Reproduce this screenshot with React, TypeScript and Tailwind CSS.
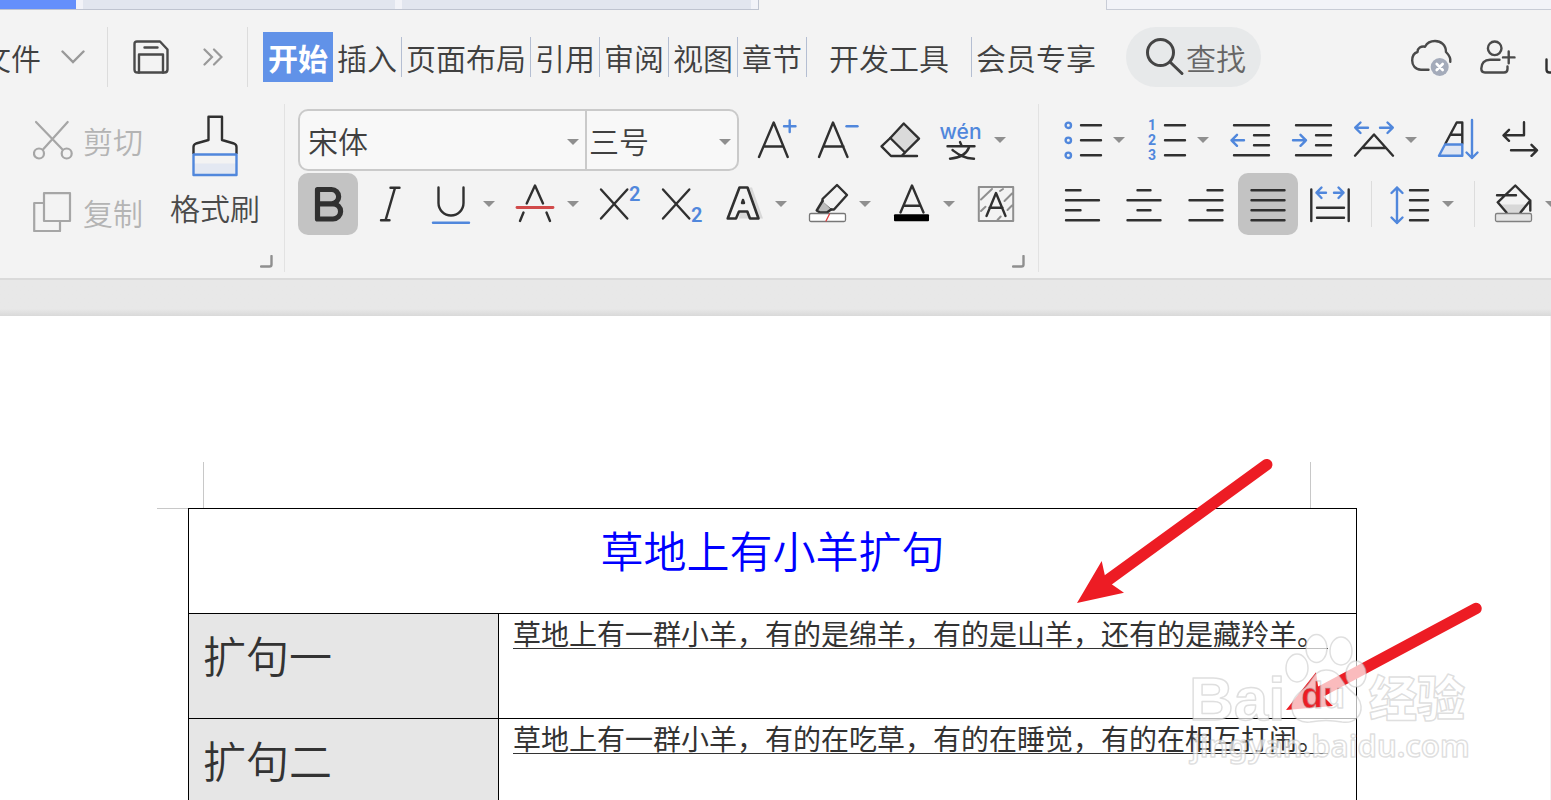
import React from "react";

const ink = "#303030";
const blue = "#5087dc";
const gray = "#8f8f8f";

const menuTabs = ["插入", "页面布局", "引用", "审阅", "视图", "章节"];

const rows = [
  {
    label: "扩句一",
    text: "草地上有一群小羊，有的是绵羊，有的是山羊，还有的是藏羚羊。",
  },
  {
    label: "扩句二",
    text: "草地上有一群小羊，有的在吃草，有的在睡觉，有的在相互打闹。",
  },
];

function Caret() {
  return (
    <svg width="12" height="6" viewBox="0 0 12 6" className="block">
      <path d="M0 0H12L6 6Z" fill={gray} />
    </svg>
  );
}

function Tool({ label, children, active, drop }: any) {
  return (
    <div className="flex items-center shrink-0">
      <button
        aria-label={label}
        className={`flex items-center justify-center mx-px w-[60px] h-[62px] rounded-[10px] ${
          active ? "bg-[#c3c3c3]" : ""
        }`}
      >
        <svg
          width="40"
          height="40"
          viewBox="0 0 40 40"
          fill="none"
          stroke={ink}
          strokeWidth="2.4"
          strokeLinecap="round"
          strokeLinejoin="round"
          className="overflow-visible"
        >
          {children}
        </svg>
      </button>
      {drop && (
        <button aria-label={`${label}选项`} className="w-[22px] h-[62px]">
          <Caret />
        </button>
      )}
    </div>
  );
}

function Corner() {
  return (
    <svg width="13" height="13" viewBox="0 0 13 13" fill="none">
      <path d="M1 11.5H9.5Q11.5 11.5 11.5 9.5V1" stroke={gray} strokeWidth="2.4" strokeLinecap="round" />
    </svg>
  );
}

function Divider() {
  return <div className="w-px h-[60px] bg-[#dcdcdc] shrink-0"></div>;
}

function TabStrip() {
  return (
    <div className="flex h-[10px] bg-[#f2f3f8] shrink-0">
      <div className="w-[759px] flex gap-[7px] border-b border-r border-[#bfc4d0]">
        <div className="w-[76px] bg-[#648ffb]"></div>
        <div className="w-[312px] bg-[#e2e6ef]"></div>
        <div className="w-[349px] bg-[#e2e6ef]"></div>
      </div>
      <div className="w-[347px] bg-[#f3f3f3]"></div>
      <div className="flex-1 border-b border-l border-[#c8ccd6]"></div>
    </div>
  );
}

function MenuBar() {
  return (
    <nav className="flex items-center h-[94px] shrink-0 text-[30px] leading-[38px] text-[#404040] whitespace-nowrap">
      <button className="-ml-[19px] mr-[22px] flex items-center gap-5">
        文件
        <svg width="24" height="14" viewBox="0 0 24 14" fill="none">
          <path d="M1.5 1.5L12 12L22.5 1.5" stroke="#999" strokeWidth="2.4" strokeLinecap="round" />
        </svg>
      </button>
      <Divider />
      <button aria-label="保存" className="ml-[25px]">
        <svg width="36" height="34" viewBox="0 0 36 34" fill="none" stroke="#4a4a4a" strokeWidth="2.4" strokeLinejoin="round" strokeLinecap="round">
          <path d="M4 1.5H27L34.5 9.5V29.5Q34.5 32.5 31.5 32.5H4.5Q1.5 32.5 1.5 29.5V4Q1.5 1.5 4 1.5Z" />
          <path d="M11.500 7.500H24.500M6 32.500V14.500H30V32.500" />
        </svg>
      </button>
      <button aria-label="更多" className="ml-[34px] mr-6">
        <svg width="20" height="18" viewBox="0 0 20 18" fill="none" stroke="#999" strokeWidth="2.2" strokeLinecap="round">
          <path d="M1.500 1.500L9 9L1.500 16.500M11 1.500L18.500 9L11 16.500" />
        </svg>
      </button>
      <Divider />
      <button className="ml-[15px] w-[70px] h-[50px] bg-[#6192e8] text-white font-bold">
        开始
      </button>
      {menuTabs.map((name) => (
        <button key={name} className="h-10 px-1 border-r border-[#b4bed2]">
          {name}
        </button>
      ))}
      <button className="h-10 px-[22px] border-r border-[#b4bed2]">开发工具</button>
      <button className="px-1">会员专享</button>
      <label className="ml-[26px] flex items-center w-[135px] h-[60px] pl-5 rounded-full bg-[#e7e9ea]">
        <svg width="40" height="38" viewBox="0 0 40 38" fill="none" stroke="#454545" strokeWidth="3" strokeLinecap="round" className="shrink-0">
          <circle cx="14.500" cy="14.500" r="13" />
          <path d="M24 24L36 35.500" />
        </svg>
        <input
          type="text"
          aria-label="查找"
          placeholder="查找"
          className="w-[66px] bg-transparent outline-none placeholder:text-[#666]"
        />
      </label>
      <div className="ml-auto -mr-6 flex items-center gap-[29px]">
        <button aria-label="云同步">
          <svg width="40" height="36" viewBox="0 0 40 36" fill="none" stroke="#4a4a4a" strokeWidth="2.4" strokeLinecap="round" strokeLinejoin="round" className="overflow-visible">
            <path d="M17.500 30.700H10C4 30.700 1.200 26 1.200 21.500C1.200 17 3 14 6.500 13C6.500 9 10 7 14 7.700C16 4 20 2 24 2C30 2 35 6 35 13C38 16 40 19 39.300 22.700" />
            <circle cx="28.700" cy="28" r="9" fill="#a4abba" stroke="none" />
            <path d="M25.700 25L31.700 31M31.700 25L25.700 31" stroke="#fff" strokeWidth="2.600" />
          </svg>
        </button>
        <button aria-label="邀请">
          <svg width="36" height="34" viewBox="0 0 36 34" fill="none" stroke="#4a4a4a" strokeWidth="2.4" strokeLinecap="round" strokeLinejoin="round">
            <circle cx="14.700" cy="8.300" r="6.800" />
            <path d="M19.500 19.700H10C4.500 19.700 1.300 23 1.300 28.500Q1.300 32.500 5 32.500H24Q27.500 32.500 27.500 29V26.500M28.700 11.500V23.300M23 17.400H34.500" />
          </svg>
        </button>
        <button aria-label="分享">
          <svg width="30" height="34" viewBox="0 0 30 34" fill="none" stroke="#303030" strokeWidth="2.4" strokeLinecap="round">
            <path d="M1.500 19.500V29.500Q1.500 32.500 4.500 32.500H26M10 12L16 3L22 12" />
          </svg>
        </button>
      </div>
    </nav>
  );
}

function Clipboard() {
  return (
    <section className="flex w-[285px] shrink-0 border-r border-[#e2e2e2] text-[30px] leading-[38px] whitespace-nowrap">
      <div className="flex flex-col gap-[10px] pt-[5px] pl-[33px] shrink-0">
        <button className="flex items-center gap-[10px] h-[62px] text-[#b4b4b4]">
          <svg width="40" height="40" viewBox="0 0 40 40" fill="none" stroke="#a6a6a6" strokeWidth="2.2" strokeLinecap="round">
            <circle cx="6" cy="33.500" r="5" />
            <circle cx="33.700" cy="33.500" r="5" />
            <path d="M3 2L29.500 29.500M34.700 2L10 29.500" />
          </svg>
          剪切
        </button>
        <button className="flex items-center gap-[10px] h-[62px] text-[#b4b4b4]">
          <svg width="40" height="40" viewBox="0 0 40 40" fill="none" stroke="#a6a6a6" strokeWidth="2.2" strokeLinejoin="round">
            <path d="M11 1.200H37V29H11ZM11 11H1.200V39H27V29" />
          </svg>
          复制
        </button>
      </div>
      <button className="ml-[27px] shrink-0 flex flex-col items-center self-start pt-[11px] gap-[11px] text-[#4a4a4a]">
        <svg width="46" height="62" viewBox="0 0 46 62" fill="none" strokeWidth="2.400" strokeLinejoin="round">
          <path d="M1.500 39V32Q1.500 29.500 4 28.500L16.500 25V1.800H30V25L42 28.500Q44.500 29.500 44.500 32V39" stroke={ink} />
          <path d="M2 48.500H44V60H2Z" fill="#e3e8f2" />
          <path d="M1.500 39.500H44.500V60H1.500Z" stroke={blue} />
        </svg>
        格式刷
      </button>
      <button aria-label="剪贴板设置" className="ml-auto self-end mr-[13px] pb-1">
        <Corner />
      </button>
    </section>
  );
}

function FontGroup() {
  return (
    <section className="w-[754px] shrink-0 border-r border-[#e2e2e2] pt-[5px] pl-3 flex flex-col gap-[2px]">
      <div className="flex h-[62px]">
        <div className="flex w-[441px] ml-px mr-[7px] border-2 border-[#cacaca] rounded-[10px] bg-[#f8f8f8] text-[30px] text-[#404040] overflow-hidden">
          <div className="relative w-[287px] border-r-2 border-[#cacaca]">
            <select aria-label="字体" className="appearance-none w-full h-full pl-2 bg-transparent">
              <option>宋体</option>
            </select>
            <span className="absolute right-[6px] top-[28px] pointer-events-none">
              <Caret />
            </span>
          </div>
          <div className="relative flex-1">
            <select aria-label="字号" className="appearance-none w-full h-full pl-[2px] bg-transparent">
              <option>三号</option>
            </select>
            <span className="absolute right-[6px] top-[28px] pointer-events-none">
              <Caret />
            </span>
          </div>
        </div>
        <Tool label="增大字号">
          <path d="M2 37L16.700 2.500L30.700 37M6.500 26.500H26.500" />
          <path d="M32.700 .5V12M27 6.300H38.500" stroke={blue} />
        </Tool>
        <Tool label="减小字号">
          <path d="M0 37L14 2.500L28.500 37M4.500 26.500H24.500" />
          <path d="M27.500 6.300H38.500" stroke={blue} />
        </Tool>
        <Tool label="清除格式">
          <path d="M22.700 3.500L38 18.700L24 32.500L9.300 18Z" fill="#dadada" />
          <path d="M9.300 18L.5 26.300L10 36H36M24 32.500L20.500 36" />
        </Tool>
        <Tool label="拼音指南" drop>
          <text x="17.500" y="19" textAnchor="middle" fontSize="21" fontFamily="Inter, sans-serif" fontWeight="500" fill={blue} stroke="none">
            wén
          </text>
          <path d="M17 22L18.500 25.500M4.500 26.300H31.500M26 27.500C23 35 16 38 7 38.700M9.500 30C15 34 20 38.500 31 38.700" />
        </Tool>
      </div>
      <div className="flex h-[62px]">
        <Tool label="加粗" active>
          <path d="M9.500 5.500H23.500A7 7 0 0 1 23.500 19.800H9.500M9.500 5.500V35H25A7.600 7.600 0 0 0 25 19.800" strokeWidth="5.200" />
        </Tool>
        <Tool label="倾斜">
          <path d="M20.500 3.800H29.500M25 3.800L15.500 36.300M11 36.300H19.500" />
        </Tool>
        <Tool label="下划线" drop>
          <path d="M6.500 3.500V19A12.500 12.500 0 0 0 31.500 19V3.500" />
          <path d="M1 38.700H37" stroke={blue} />
        </Tool>
        <Tool label="删除线" drop>
          <path d="M10.700 19.500L19 1.500L27 19.500M7.500 28.500L4 37M30.500 28.500L34 37" />
          <path d="M1 23.500H37" stroke="#d14a4a" strokeWidth="2.800" />
        </Tool>
        <Tool label="上标">
          <path d="M1 5.500L27.300 34.500M27.300 5.500L1 34.500" />
          <text x="29" y="17" fontSize="20" fontFamily="Roboto, sans-serif" fontWeight="600" fill={blue} stroke="none">
            2
          </text>
        </Tool>
        <Tool label="下标">
          <path d="M1 5.500L27.300 34.500M27.300 5.500L1 34.500" />
          <text x="29" y="37.500" fontSize="20" fontFamily="Roboto, sans-serif" fontWeight="600" fill={blue} stroke="none">
            2
          </text>
        </Tool>
        <Tool label="文字效果" drop>
          <path d="M20 3.500H28L39 34.500H15Z" fill="#d8d8d8" stroke="none" />
          <path d="M3.700 34.500L15.500 3.500H23.500L34.500 34.500H26L23.300 27.500H15L12 34.500Z" fill="#f3f3f3" strokeWidth="2.600" />
          <path d="M19 16L18 19H20Z" />
        </Tool>
        <Tool label="突出显示" drop>
          <path d="M29 1L39 11L26 25.500H22L14.500 19V15Z" />
          <path d="M14.500 17L8.700 26.500L12 28.500H19L23 25.500" fill="#bdbdbd" />
          <rect x="1.500" y="29.500" width="36" height="8" rx="1.500" fill="#fff" stroke="#777" strokeWidth="1.300" />
          <path d="M18 37L21.500 30" stroke="#e04040" strokeWidth="1.300" />
        </Tool>
        <Tool label="字体颜色" drop>
          <path d="M8.500 28.500L20 1.500L31.500 28.500M11.500 21.700H28.500" />
          <rect x="2" y="30.200" width="35" height="7" rx="1" fill="#000" stroke="none" />
        </Tool>
        <Tool label="字符底纹">
          <path d="M2.800 3H37.200V37H2.800ZM5 15.500L16 5M5 27L9.500 22.700M24 7L27 5M28.500 17L36 9.500M31.500 26L36 21.500M21.500 36L24.700 32.500" stroke={gray} strokeWidth="2" />
          <path d="M10.500 32L20 9L29.500 32M13.500 23.700H26.500" />
        </Tool>
      </div>
      <button aria-label="字体设置" className="mt-auto ml-auto mr-[13px] pb-1">
        <Corner />
      </button>
    </section>
  );
}

function Paragraph() {
  return (
    <section className="shrink-0 pt-[5px] pl-3 flex flex-col gap-[2px]">
      <div className="flex h-[62px]">
        <Tool label="项目符号" drop>
          <path d="M19 5.300H39M19 20.300H39M19 35.300H39" />
          <g stroke={blue}>
            <circle cx="6.300" cy="5.300" r="2.700" />
            <circle cx="6.300" cy="20.300" r="2.700" />
            <circle cx="6.300" cy="35.300" r="2.700" />
          </g>
        </Tool>
        <Tool label="编号" drop>
          <path d="M19 5.300H39M19 20.300H39M19 35.300H39" />
          <g fontSize="14" fontFamily="Roboto, sans-serif" fontWeight="700" fill={blue} stroke="none">
            <text x="2" y="10">1</text>
            <text x="2" y="25">2</text>
            <text x="2" y="40">3</text>
          </g>
        </Tool>
        <Tool label="减少缩进">
          <path d="M4 5.300H39M24 15.300H39M24 25.300H39M4 35.300H39" />
          <path d="M14 20.300H1.500M7 14.800L1.500 20.300L7 25.800" stroke={blue} />
        </Tool>
        <Tool label="增加缩进">
          <path d="M4 5.300H39M24 15.300H39M24 25.300H39M4 35.300H39" />
          <path d="M1 20.300H14M8.500 14.800L14 20.300L8.500 25.800" stroke={blue} />
        </Tool>
        <Tool label="中文版式" drop>
          <path d="M1 35.700L20 14.500L39 35.700M9 28H31" />
          <path d="M14 7.700H1.500M6.500 2.500L1.200 7.700L6.500 13M26 7.700H38.500M33.500 2.500L38.800 7.700L33.500 13" stroke={blue} />
        </Tool>
        <Tool label="排序">
          <path d="M7.500 23.500L18.700 2.500H24.300V23.500M12.500 14.700H24" />
          <path d="M7 24.500H24.300V35.700H1Z" fill="#dfe6f3" stroke={blue} />
          <path d="M34 0V38M28.500 32.500L34 38L39.500 32.500" stroke={blue} />
        </Tool>
        <Tool label="显示编辑标记">
          <path d="M24 2.300V15.300H4M9 9.800L3.500 15.300L9 20.800M11 30.300H37M31.500 24.800L37 30.300L31.500 35.800" />
        </Tool>
      </div>
      <div className="flex items-center h-[62px]">
        <Tool label="左对齐">
          <path d="M4 6.300H18.500M4 16.300H37M4 26.300H18.500M4 36.300H37" />
        </Tool>
        <Tool label="居中">
          <path d="M13.500 6.300H26.500M3.500 16.300H36.500M13.500 26.300H26.500M3.500 36.300H36.500" />
        </Tool>
        <Tool label="右对齐">
          <path d="M21.500 6.300H36.500M3.500 16.300H36.500M21.500 26.300H36.500M3.500 36.300H36.500" />
        </Tool>
        <Tool label="两端对齐" active>
          <path d="M3.500 6.300H36.500M3.500 16.300H36.500M3.500 26.300H36.500M3.500 36.300H36.500" />
        </Tool>
        <Tool label="分散对齐">
          <path d="M1.300 5.500V37M38.700 5.500V37M7 23.700H34M7 33.700H34" />
          <path d="M16 8.700H6.500M11.500 3.500L6.500 8.700L11.500 14M24 8.700H33.500M28.500 3.500L33.500 8.700L28.500 14" stroke={blue} />
        </Tool>
        <div className="ml-[10px] mr-2 w-px h-[46px] bg-[#dcdcdc]"></div>
        <Tool label="行距" drop>
          <path d="M19 6.300H37M19 16.300H37M19 26.300H37M19 36.300H37" />
          <path d="M6 3.500V39M.5 9L6 3.500L11.500 9M.5 33.500L6 39L11.500 33.500" stroke={blue} />
        </Tool>
        <div className="ml-[10px] mr-2 w-px h-[46px] bg-[#dcdcdc]"></div>
        <Tool label="底纹颜色" drop>
          <path d="M6.500 20.500H32L25 29H13Z" fill="#d8d8d8" stroke="none" />
          <path d="M12.500 28.500L3.700 18.300L21.300 1.500L36.300 16.500L26.500 28.500M3 11.300H22M36.300 16.500V26.500" />
          <rect x="1.500" y="29.500" width="36" height="8" rx="1.500" fill="#e4e4e4" stroke="#808080" strokeWidth="1.300" />
        </Tool>
      </div>
    </section>
  );
}

function Arrows() {
  return (
    <svg width="403" height="246" viewBox="1077 459 403 246" fill="#ed1c24" className="absolute left-[1077px] top-[143px] overflow-visible pointer-events-none">
      <path d="M1266.700 464.700L1106 581.500" stroke="#ed1c24" strokeWidth="11.500" strokeLinecap="round" />
      <path d="M1077 603L1101.700 561L1105 576L1112 584.500L1124 592.700Z" />
      <path d="M1476 608.500L1320 692" stroke="#ed1c24" strokeWidth="11.500" strokeLinecap="round" />
      <path d="M1286 710L1316 672.300L1318 686L1324 697L1333 706Z" />
    </svg>
  );
}

function Watermark() {
  return (
    <svg
      width="285"
      height="140"
      viewBox="1187 630 285 140"
      fill="#fff"
      fillOpacity="0.7"
      stroke="#b8b8b8"
      strokeOpacity="0.45"
      strokeWidth="1.500"
      strokeLinejoin="round"
      className="absolute left-[1187px] top-[314px] overflow-visible pointer-events-none"
    >
      <mask id="pad" maskUnits="userSpaceOnUse" x="1280" y="660" width="90" height="70">
        <rect x="1280" y="660" width="90" height="70" fill="#fff" fillOpacity="1" stroke="none" />
        <text x="1301" y="708" fontSize="36" fontWeight="700" fontFamily="Liberation Sans, sans-serif" fill="#000" fillOpacity="1" stroke="none">
          du
        </text>
      </mask>
      <ellipse cx="1297" cy="668" rx="11" ry="14" />
      <ellipse cx="1316.500" cy="648.500" rx="10.500" ry="14" />
      <ellipse cx="1341" cy="651" rx="11" ry="14" />
      <ellipse cx="1356" cy="674" rx="10" ry="13" />
      <path
        mask="url(#pad)"
        d="M1326 670C1314 670 1313 681 1305 688C1297 694 1291 700 1292 709C1293 719 1301 723 1310 722C1320 720 1332 720 1342 722C1354 724 1362 716 1361 706C1360 696 1352 693 1346 686C1340 678 1338 670 1326 670Z"
      />
      <text x="1301" y="708" fontSize="36" fontWeight="700" fontFamily="Liberation Sans, sans-serif" fill="none">
        du
      </text>
      <text x="1189" y="720" fontSize="62" fontWeight="700" fontFamily="Liberation Sans, sans-serif">
        Bai
      </text>
      <text x="1369" y="716" fontSize="48" fontWeight="900" fontFamily="Noto Sans CJK SC, sans-serif">
        经验
      </text>
      <text x="1191" y="757" fontSize="31" fontWeight="600" fontFamily="Noto Sans, sans-serif">
        jingyan.baidu.com
      </text>
    </svg>
  );
}

function Document() {
  return (
    <main className="relative flex-1 mr-px bg-white pt-[146px] pl-[157px] pr-[193px]">
      <div className="ml-[46px] mr-[46px] h-[46px] border-x border-[#c8c8c8]"></div>
      <div className="flex">
        <div className="w-[31px] shrink-0 border-t border-[#c8c8c8]"></div>
        <table className="flex-1 w-full table-fixed border-collapse border border-black text-[#333]">
          <colgroup>
            <col className="w-[310px]" />
            <col />
          </colgroup>
          <tbody>
            <tr className="h-[105px]">
              <th colSpan={2} className="border border-black align-top pt-[10px] font-[350] text-[43px] leading-[60px] text-[#0000ff]">
                草地上有小羊扩句
              </th>
            </tr>
            {rows.map((row) => (
              <tr key={row.label} className="h-[105px]">
                <th className="border border-black bg-[#e6e6e6] align-top text-left font-[350] pl-[14px] pt-[10px] text-[43px] leading-[60px]">
                  {row.label}
                </th>
                <td className="border border-black align-top px-[14px] pt-1">
                  <span className="block w-[815px] h-[31px] border-b border-[#333] text-[28px] leading-[30px] font-normal whitespace-nowrap">
                    {row.text}
                  </span>
                </td>
              </tr>
            ))}
          </tbody>
        </table>
      </div>
      <Arrows />
      <Watermark />
    </main>
  );
}

export default function App() {
  return (
    <div className="h-screen flex flex-col overflow-hidden bg-[#f3f3f3] font-['Noto_Sans_CJK_SC',sans-serif] font-[350]">
      <TabStrip />
      <MenuBar />
      <div className="flex h-[168px] mb-[6px] shrink-0">
        <Clipboard />
        <FontGroup />
        <Paragraph />
      </div>
      <div className="h-[38px] shrink-0 border-t-2 border-[#dadada] bg-linear-to-b from-[#e8e8e8] from-80% to-[#d9d9d9]"></div>
      <Document />
    </div>
  );
}
